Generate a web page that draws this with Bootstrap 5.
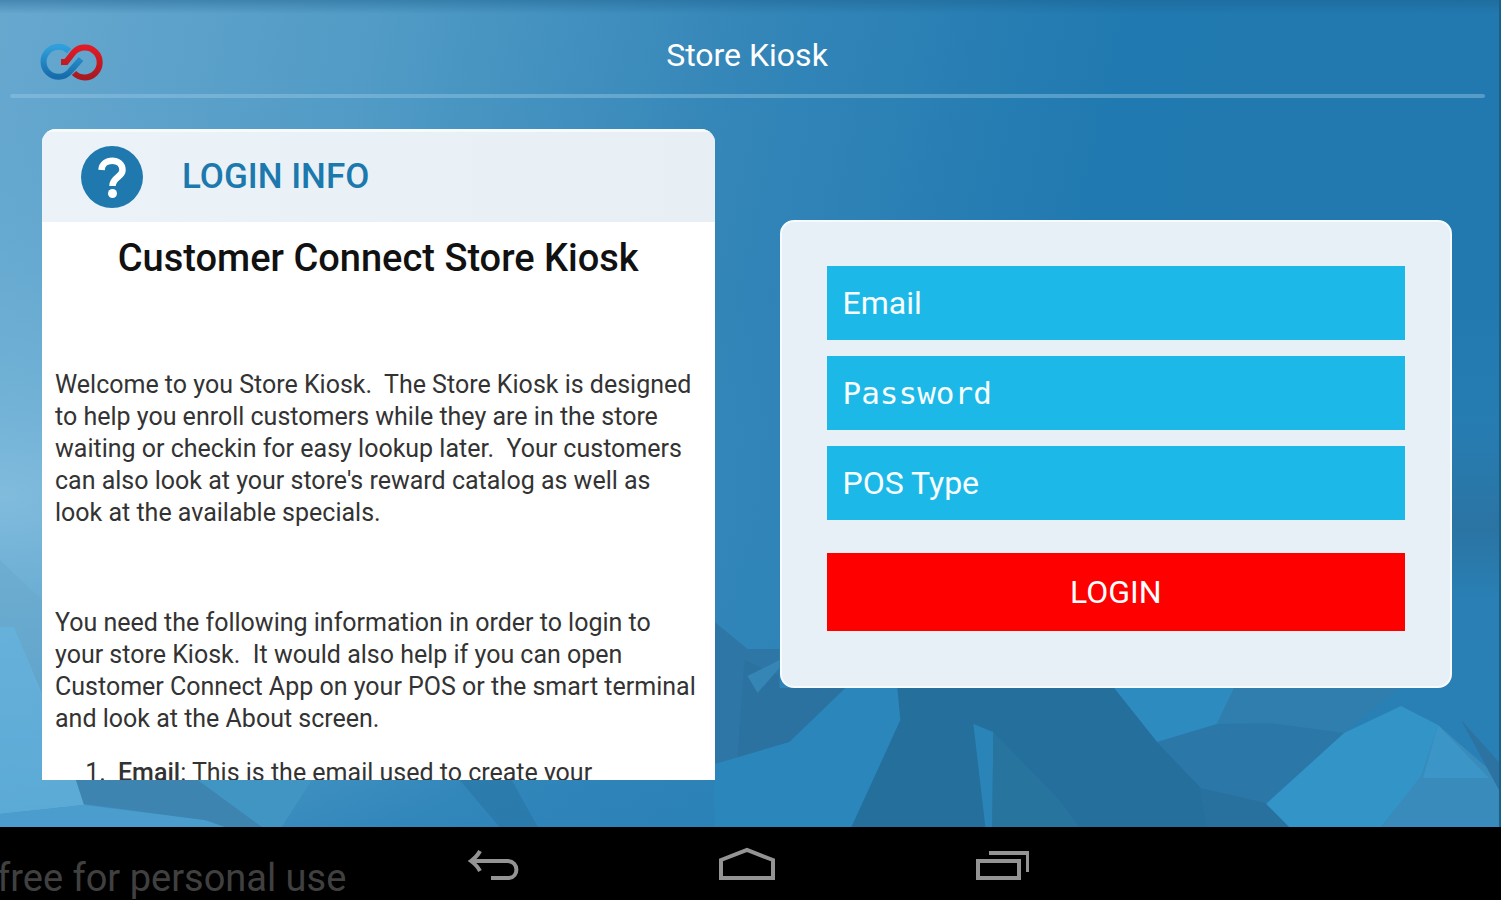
<!DOCTYPE html>
<html lang="en">
<head>
<meta charset="utf-8">
<meta name="viewport" content="width=device-width, initial-scale=1">
<title>Store Kiosk</title>
<link rel="stylesheet" href="https://cdn.jsdelivr.net/npm/bootstrap@5.3.0/dist/css/bootstrap.min.css">
<style>
  body { font-family: Roboto, "Liberation Sans", sans-serif; background: #000; }
  .stage { background: #2f86b9; border-right: 2px solid #17608c; min-height: 0; }
  .backdrop { z-index: 0; }
  .layer { z-index: 1; min-height: 0; }
  .topbar { height: 94px; padding: 0 45px 0 40px; }
  .topbar h1 { font-size: 32px; line-height: 40px; padding-top: 31px; }
  .brand, .brand-space { width: 64px; }
  .brand { padding-top: 30px; }
  .rule { height: 4px; margin: 0 14px 0 10px; background: rgba(150, 200, 228, .45); border-radius: 2px; }
  .panels { display: grid; grid-template-columns: 1fr 1fr; grid-template-rows: 100%; column-gap: 65px; padding: 31px 47px 47px 42px; min-height: 0; }
  .panel { border-radius: 14px; min-width: 0; }
  .info { border-radius: 14px 14px 0 0; min-height: 0; }
  .info-head { background: linear-gradient(90deg, #ebf3f8, #e7eff5); height: 93px; padding: 0 39px; gap: 39px; flex: none; border-top: 3px solid #f6fafc; }
  .info-head h2 { font-size: 35px; font-weight: 500; color: #1c79ae; line-height: 40px; }
  .info-body { color: #333; padding: 16px 13px 0; font-size: 25px; line-height: 32px; min-height: 0; }
  .info-body h3 { font-size: 38px; font-weight: 500; line-height: 40px; color: #111; margin-bottom: 91px; }
  .info-body p { margin-bottom: 78px; }
  .info-body p.closing { margin-bottom: 22px; }
  .info-body ol { padding-left: 57px; }
  .info-body li { padding-left: 6px; }
  .login { background: #e7f0f6; border: 2px solid #f7fbfd; margin-top: 91px; padding: 44px 45px 55px; gap: 16px; }
  .field, .field:focus { background-color: #1cb9e8; background-image: none; color: #f8fdff; border: 0; border-radius: 0; height: 74px; padding: 0 16px; font-size: 32px; box-shadow: none; }
  .field::placeholder { color: #f8fdff; opacity: 1; }
  .field-mono { font-family: "DejaVu Sans Mono", monospace; font-size: 31px; }
  .enter { background: #f00; color: #fff; border: 0; border-radius: 0; height: 78px; font-size: 32px; margin-top: 17px; }
  .sysbar { height: 73px; padding-right: 5px; }
  .note, .spare { flex: 1 1 0; }
  .note { color: #404040; font-size: 38px; line-height: 40px; padding-top: 31px; margin-left: -3px; }
  .keys { gap: 198px; padding-top: 12px; }
  .key { width: 56px; height: 56px; }
</style>
</head>
<body>
<div class="vh-100 d-flex flex-column overflow-hidden">
  <div class="stage position-relative flex-grow-1 d-flex flex-column overflow-hidden pt-1">
    <svg class="backdrop position-absolute top-0 start-0 w-100 h-100" viewBox="0 0 1500 827" preserveAspectRatio="none" aria-hidden="true">
      <defs>
        <linearGradient id="sky" x1="0" y1="0" x2="1" y2="0.12">
          <stop offset="0" stop-color="#67a8cf"/><stop offset=".25" stop-color="#519bc6"/>
          <stop offset=".5" stop-color="#3486b8"/><stop offset=".75" stop-color="#2079b0"/>
          <stop offset="1" stop-color="#2279af"/>
        </linearGradient>
        <linearGradient id="floor" x1="0" y1="0" x2="0" y2="1">
          <stop offset="0" stop-color="#3c90c2" stop-opacity="0"/><stop offset=".5" stop-color="#3489bc" stop-opacity=".4"/>
          <stop offset="1" stop-color="#2a82b8" stop-opacity=".7"/>
        </linearGradient>
        <radialGradient id="glow" cx="0" cy=".6" r=".48">
          <stop offset="0" stop-color="#86bfdf" stop-opacity=".9"/><stop offset="1" stop-color="#5fa9d2" stop-opacity="0"/>
        </radialGradient>
        <linearGradient id="top" x1="0" y1="0" x2="0" y2="1">
          <stop offset="0" stop-color="#1c5f8c" stop-opacity=".45"/><stop offset="1" stop-color="#1c5f8c" stop-opacity="0"/>
        </linearGradient>
        <linearGradient id="shade" x1="0" y1="0" x2="0" y2="1">
          <stop offset="0" stop-color="#2b6f9c" stop-opacity="0"/><stop offset=".6" stop-color="#2b6f9c" stop-opacity=".7"/>
          <stop offset="1" stop-color="#2b6f9c" stop-opacity="0"/>
        </linearGradient>
      </defs>
      <rect width="1500" height="827" fill="url(#sky)"/>
      <rect y="300" width="1500" height="527" fill="url(#floor)"/>
      <rect width="1500" height="827" fill="url(#glow)"/>
      <rect width="1500" height="14" fill="url(#top)"/>
      <rect x="1440" y="420" width="60" height="180" fill="url(#shade)"/>
      <path d="M14 627L42 700V600L0 560V627z" fill="#6aa7cb" opacity=".5"/>
      <path d="M0 627H14L42 694V780H76L84 805L0 814z" fill="#66b3de" opacity=".7"/>
      <path d="M0 814L84 805L205 820L230 827H0z" fill="#4b9fcd" opacity=".9"/>
      <path d="M76 780H198L262 827H225L205 820L84 804z" fill="#3d84b0"/>
      <path d="M198 780H312L282 827H262z" fill="#4095c3"/>
      <path d="M460 780H512L538 827H500z" fill="#25719f" opacity=".5"/>
      <path d="M715 622L748 649H780V688H846L790 742L738 759L715 764z" fill="#2d76a5"/>
      <path d="M745 660L738 759L790 742L846 688H780V676z" fill="#2a709e" opacity=".6"/>
      <path d="M748 676L780 660V668L758 693z" fill="#3585b5"/>
      <path d="M715 764L790 742L846 688H898L901 720L855 827H715z" fill="#2a86bb"/>
      <path d="M898 688H1115L1158 742L1202 788L1208 827H852L901 720z" fill="#256f9d"/>
      <path d="M974 724L994 732L993 827H986z" fill="#2a84b8"/>
      <path d="M994 732L1060 800L1080 827H993z" fill="#28759f" opacity=".8"/>
      <path d="M1115 688H1235L1218 724L1158 742z" fill="#2d8bc0"/>
      <path d="M1235 688H1400L1345 733L1270 723H1218z" fill="#2f7eae"/>
      <path d="M1158 742L1218 724L1270 723L1345 733L1267 803L1202 788z" fill="#2b78a8"/>
      <path d="M1202 788L1267 803L1292 827H1208z" fill="#28719f"/>
      <path d="M1345 733L1402 706L1439 725L1425 775L1382 827H1290L1267 804z" fill="#3394c8"/>
      <path d="M1439 725L1500 778V827H1382L1422 776z" fill="#388bba"/>
      <path d="M1439 725L1490 778H1424z" fill="#3c95c7"/>
      <path d="M1462 720L1500 762V790z" fill="#2d73a1"/>
    </svg>

    <header class="layer topbar d-flex justify-content-between align-items-start">
      <a href="#" class="brand" aria-label="Home">
        <svg class="d-block" width="64" height="56" viewBox="0 0 64 56" fill="none" stroke-width="6" aria-hidden="true">
          <defs>
            <linearGradient id="lb" x1="0" y1="0" x2="0" y2="1"><stop offset="0" stop-color="#2fa0db"/><stop offset="1" stop-color="#176cab"/></linearGradient>
            <linearGradient id="lr" x1="0" y1="0" x2="0" y2="1"><stop offset="0" stop-color="#e01b26"/><stop offset="1" stop-color="#a81a20"/></linearGradient>
          </defs>
          <path d="M29 17A15 15 0 1 0 29.500 38L41 25" stroke="url(#lb)"/>
          <path d="M21 28H26L34 18A15 15 0 1 1 34 39" stroke="url(#lr)"/>
        </svg>
      </a>
      <h1 class="layer text-white fw-normal mb-0">Store Kiosk</h1>
      <span class="brand-space"></span>
    </header>
    <div class="layer rule"></div>

    <main class="layer panels flex-grow-1 align-items-start">
      <section class="panel info bg-white d-flex flex-column overflow-hidden h-100">
        <div class="info-head d-flex align-items-center">
          <svg width="62" height="62" viewBox="0 0 62 62" aria-hidden="true">
            <circle cx="31" cy="31" r="31" fill="#1f79ae"/>
            <path d="M20.500 24C21 11.500 41.500 11.500 41.500 24C41.500 31.500 31.500 31 31.500 40" fill="none" stroke="#fff" stroke-width="6.500"/>
            <circle cx="31.500" cy="47.500" r="4.500" fill="#fff"/>
          </svg>
          <h2 class="mb-0">LOGIN INFO</h2>
        </div>
        <div class="info-body overflow-hidden">
          <h3 class="text-center">Customer Connect Store Kiosk</h3>
          <p>Welcome to you Store Kiosk.&nbsp; The Store Kiosk is designed to help you enroll customers while they are in the store waiting or checkin for easy lookup later.&nbsp; Your customers can also look at your store's reward catalog as well as look at the available specials.</p>
          <p class="closing">You need the following information in order to login to your store Kiosk.&nbsp; It would also help if you can open Customer Connect App on your POS or the smart terminal and look at the About screen.</p>
          <ol><li><strong class="fw-medium">Email</strong>: This is the email used to create your</li></ol>
        </div>
      </section>

      <form class="panel login d-flex flex-column">
        <input class="form-control field" id="email" type="email" placeholder="Email" aria-label="Email">
        <input class="form-control field field-mono" id="password" type="password" placeholder="Password" aria-label="Password">
        <select class="form-select field" id="pos" aria-label="POS Type"><option>POS Type</option></select>
        <button class="btn enter w-100" type="button">LOGIN</button>
      </form>
    </main>
  </div>

  <footer class="sysbar bg-black d-flex flex-shrink-0 overflow-hidden">
    <div class="note text-nowrap">free for personal use</div>
    <nav class="keys d-flex">
      <button class="key btn p-0 border-0" type="button" aria-label="Back">
        <svg class="d-block" width="56" height="56" viewBox="0 0 56 56" fill="none" stroke="#949494" stroke-width="4" aria-hidden="true"><path d="M6 22H43C54 23 54 38 44 39H26"/><path d="M15 12C13 16 10 19 6 22C10 25 13 28 15 32"/></svg>
      </button>
      <button class="key btn p-0 border-0" type="button" aria-label="Home">
        <svg class="d-block" width="56" height="56" viewBox="0 0 56 56" fill="none" stroke="#949494" stroke-width="4" aria-hidden="true"><path d="M2 39V21L28 11L54 21V39z"/></svg>
      </button>
      <button class="key btn p-0 border-0" type="button" aria-label="Recent apps">
        <svg class="d-block" width="56" height="56" viewBox="0 0 56 56" fill="none" stroke="#949494" stroke-width="4" aria-hidden="true"><path d="M5 22H46V39H5z"/><path d="M16 14H55V33"/></svg>
      </button>
    </nav>
    <div class="spare"></div>
  </footer>
</div>
<script src="https://cdn.jsdelivr.net/npm/bootstrap@5.3.0/dist/js/bootstrap.bundle.min.js"></script>
</body>
</html>
